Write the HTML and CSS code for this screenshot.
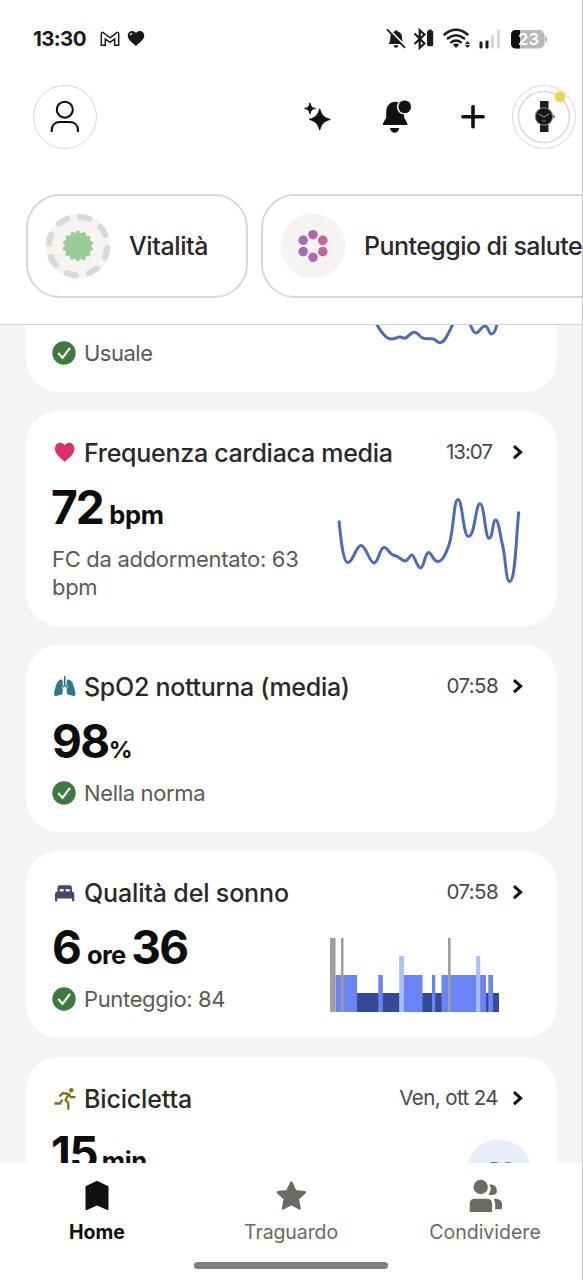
FILE: index.html
```html
<!DOCTYPE html>
<html lang="it">
<head>
<meta charset="utf-8">
<title>Home</title>
<link rel="stylesheet" href="styles.css">
</head>
<body>
<svg class="defs" width="0" height="0" aria-hidden="true">
  <symbol id="check" viewBox="0 0 24 24"><circle cx="12" cy="12" r="11.7" fill="#3c7a3f"/><path d="M6.200 11.900l4.300 4.900L18 6.800" fill="none" stroke="#fff" stroke-width="2.200"/></symbol>
  <symbol id="chevron" viewBox="0 0 12 18"><path d="M2 2.200l6.600 6L2 14.200" fill="none" stroke="#0d0d0d" stroke-width="3"/></symbol>
</svg>
<div class="screen">
  <header class="header">
    <div class="status">
      <span class="clock">13:30</span>
      <svg class="st-mail" viewBox="0 0 20 16"><path d="M1.300 14.200V2.600Q1.500 1 3 1.400L10 6.800l7-5.400q1.500-.4 1.700 1.200v11.600h-4V8L10 11.400 5.300 8v6.200z" fill="none" stroke="#1a1a1a" stroke-width="1.500"/></svg>
      <svg class="st-heart" viewBox="0 0 18 17"><path d="M9 16C5 12.500.7 9.500.7 5.500.7 2.700 3 .9 5.300.9c1.600 0 2.900.8 3.700 2 .8-1.200 2-2 3.600-2 2.500 0 4.700 1.900 4.700 4.700C17.300 9.500 13 12.500 9 16z" fill="#1a1a1a"/><path d="M3.300 5.200Q3.600 3.700 5 3.300" fill="none" stroke="#fff" stroke-width="1.300"/></svg>
      <svg class="st-right" viewBox="385 26 165 26">
        <g fill="#1a1a1a">
          <path d="M388.500 44c1.200-1.500 1.800-3 1.800-6 0-4 2.300-6.300 5-6.700v-1h1.800v1c3 .5 5 2.900 5 6.700 0 3 .6 4.500 1.800 6z"/>
          <path d="M393.500 45.300h5q-.5 2.500-2.500 2.500t-2.500-2.500z"/>
        </g>
        <path d="M388.200 28.400l18 18.500" stroke="#fff" stroke-width="1.800"/>
        <path d="M387 29.400l18 18.500" stroke="#1a1a1a" stroke-width="1.700"/>
        <path d="M414.500 33.500l10 10-4.800 4.300V30.200l4.800 4.300-10 9.500" fill="none" stroke="#1a1a1a" stroke-width="2.200"/>
        <rect x="427" y="30.700" width="6.200" height="15.500" rx="1.400" fill="#1a1a1a"/><rect x="428.500" y="29.500" width="3.200" height="2" fill="#1a1a1a"/>
        <g fill="none" stroke="#1a1a1a" stroke-width="2.400" stroke-linecap="round">
          <path d="M444.500 34.500q11.500-9.500 23 0"/><path d="M447.800 38.500q8.200-6.500 16.400 0"/><path d="M451.200 42.200q4.800-3.600 9.600 0"/>
        </g>
        <path d="M452.800 44.600q3.200-2 6.400 0L456 47.900z" fill="#1a1a1a"/>
        <path d="M469.500 41l2.600 3h-5.200zM469.500 48l2.600-3h-5.200z" fill="#1a1a1a" transform="translate(-2 0)"/>
        <rect x="479.500" y="41.500" width="3" height="7" rx="1" fill="#1a1a1a"/><rect x="485.500" y="40.500" width="3" height="8" rx="1" fill="#1a1a1a"/>
        <rect x="491" y="35" width="3" height="13.500" rx="1" fill="#d8d8d8"/><rect x="497" y="29.500" width="3" height="19" rx="1" fill="#d8d8d8"/>
        <rect x="511" y="30" width="33.500" height="18.500" rx="5" fill="#b9b9b9"/><path d="M520 30h-4q-5 0-5 5v8.500q0 5 5 5h4z" fill="#111"/><path d="M545 35.500q2.200 1 2.200 3.700t-2.200 3.800z" fill="#b9b9b9"/>
        <text x="528.500" y="45.200" class="battery">23</text>
      </svg>
    </div>
    <div class="toolbar">
      <span class="round avatar"><svg width="40" height="40" viewBox="45 97 40 40" fill="none" stroke="#0d0d0d" stroke-width="2.100"><circle cx="64.800" cy="109.700" r="8"/><path d="M51.700 132v-1.500c0-5.500 3.500-8.500 8.300-8.500h9.500c4.900 0 8.500 3 8.500 8.500v1.500"/></svg></span>
      <svg class="tool sparkle" viewBox="297 97 40 40" fill="#111" stroke="#111" stroke-width=".9"><path d="M319.700 108.700c1.700 6.300 4.300 9 10.600 10.700-6.300 1.700-8.900 4.400-10.600 10.700-1.700-6.300-4.300-9-10.600-10.700 6.300-1.700 8.900-4.400 10.600-10.700z"/><path d="M310 102.900c.8 3.600 1.900 4.900 5.500 5.500-3.600.7-4.700 1.900-5.500 5.500-.8-3.600-1.900-4.800-5.500-5.500 3.600-.6 4.700-1.900 5.500-5.500z"/></svg>
      <svg class="tool bell" viewBox="376 97 40 40" fill="#111"><path d="M383.500 125c-.8 0-.8-1-.3-2l3-5.500v-5c0-6.700 3.700-10.800 8.900-10.800s9 4.100 9 10.800v5l3 5.500c.5 1 .5 2-.5 2z"/><path d="M389.800 128h9.500q-1.200 4.700-4.700 4.700t-4.800-4.700z"/><circle cx="404.700" cy="106.800" r="7.800" fill="#fff"/><circle cx="404.700" cy="106.800" r="6.400"/></svg>
      <svg class="tool plus" viewBox="453 97 40 40"><path d="M462.900 116.700h20.200M473 106.600v20.200" stroke="#111" stroke-width="3.600" stroke-linecap="round"/></svg>
      <span class="round device"><svg width="60" height="60" viewBox="514 87 60 60"><circle cx="543.900" cy="116.900" r="25.500" fill="none" stroke="#dad8d4" stroke-width="1.500"/><path d="M540 101h8.500v8H540zM540 124h8.500v8H540z" fill="#1d1d1d"/><circle cx="544" cy="116.500" r="9.300" fill="#8c8c8c"/><circle cx="544" cy="116.500" r="8.200" fill="#161616"/><rect x="553" y="115.300" width="2" height="2.500" fill="#777"/><path d="M538.500 114l5.500 3 5.500-3.200" fill="none" stroke="#bbb" stroke-width=".8"/><path d="M542 121h4" stroke="#999" stroke-width=".7"/><circle cx="560" cy="96.800" r="5.300" fill="#f4cf4d"/></svg></span>
    </div>
    <div class="chips">
      <div class="chip vitality">
        <svg width="66" height="66" viewBox="-33 -33 66 66"><circle r="32.500" fill="#f5f4f2"/><circle r="29.300" fill="none" stroke="#dcd9d4" stroke-width="6" stroke-linecap="round" stroke-dasharray="9.500 13.510" transform="rotate(-86)"/><circle r="13.500" fill="#99cd98"/><circle r="13.600" fill="none" stroke="#99cd98" stroke-width="3.600" stroke-linecap="round" stroke-dasharray="0.010 6.093" transform="rotate(-90)"/></svg>
        <span class="t-vital">Vitalità</span>
      </div>
      <div class="chip health">
        <svg width="66" height="66" viewBox="-33 -33 66 66"><circle r="32.500" fill="#f5f4f2"/><circle cy="-11.300" r="4.800" fill="#b06aa3"/><circle cx="9.800" cy="-5.600" r="4.800" fill="#c3659b"/><circle cx="9.800" cy="5.600" r="4.800" fill="#c3659b"/><circle cy="11.300" r="4.800" fill="#b06aa3"/><circle cx="-9.800" cy="5.600" r="4.800" fill="#a16eae"/><circle cx="-9.800" cy="-5.600" r="4.800" fill="#a16eae"/></svg>
        <span class="t-health">Punteggio di salute</span>
      </div>
    </div>
  </header>

  <main class="feed">
    <section class="card clipped">
      <div class="note"><svg class="ok"><use href="#check"/></svg><span class="t-usual">Usuale</span></div>
      <svg class="tail" width="130" height="24" viewBox="370 325 130 24"><path d="M376.500 324C381 332 386 339 391 339S397 336.800 400 337s3.500 1.500 5 1.200c3.500-.7 5-6 9.300-6s5 6 10 6.300 6 .200 8 .2c3.500 0 4 4 7.700 4 5 0 8-9 13-18.700M470 324c1.500 3 3 9 6 9s5.500-7 9-7 3.500 8 6.500 8 4.500-5.500 5.500-10" class="line"/></svg>
    </section>

    <section class="card">
      <div class="head"><svg class="ico" viewBox="53 441 24 24"><path d="M64.700 461.700C60 457.500 55 454 55 448.700c0-3.800 2.500-6 5.200-6 1.900 0 3.500 1 4.500 2.500 1-1.500 2.600-2.500 4.500-2.500 2.700 0 5.200 2.200 5.200 6 0 5.300-5 8.800-9.700 13z" fill="#dc3060"/></svg><h2 class="t-heart">Frequenza cardiaca media</h2><time class="time-a">13:07</time><svg class="go"><use href="#chevron"/></svg></div>
      <div class="row">
        <div class="info"><p class="value"><b class="n72">72</b> <small class="u-bpm">bpm</small></p><p class="note long">FC da addormentato: 63<br>bpm</p></div>
        <svg class="chart" width="201" height="129" viewBox="330 473 201 129"><path class="line" d="M339 520.500C340.500 536 343 562.500 348 562.500 353 562.500 356 545.500 361 545.500S369.500 563 374 563 379.500 547.500 384 547.500 389 554.500 394 555.300 402 561 405 561 409.500 555 412 555 417 568 420.500 568 425 552.500 428.500 552.500 433 561.500 438 561.500C443 561.500 446.500 552 449 545 454 530 453.500 499.500 458 499.500S463 536.500 468.500 536.500C475 536.500 475.500 503.800 480 503.800S485 538.200 489 538.200 492.500 520 495.500 520C499 520 500 536 503 547 505.500 558 506 581.500 509.500 581.500 515.500 581.500 516 537 518.800 511.500"/></svg>
      </div>
    </section>

    <section class="card">
      <div class="head"><svg class="ico" viewBox="53 675 24 24" fill="#31788a"><path d="M64 676h1.500v9l2 2-1 1-1.800-1.700-1.800 1.700-1-1 2.100-2z"/><path d="M61.800 679.500c-3-.3-4.800 2-6 6.500-1 3.500-1.700 6-1.700 8 0 2 1.200 2.500 3 1.700 2-.9 5-.2 5.500-2.700.3-2 .2-3 .1-4.500l-1.200-1.400 1.300-1.600c0-2.500.3-5.700-1-6z"/><path d="M67.700 679.500c3-.3 4.800 2 6 6.500 1 3.500 1.700 6 1.700 8 0 2-1.200 2.500-3 1.700-2-.9-5-.2-5.500-2.700-.3-2-.2-3-.1-4.500l1.200-1.400-1.300-1.600c0-2.500-.3-5.700 1-6z"/></svg><h2 class="t-spo2">SpO2 notturna (media)</h2><time>07:58</time><svg class="go"><use href="#chevron"/></svg></div>
      <div class="row"><div class="info"><p class="value"><b class="n98">98</b><small class="u-pct">%</small></p><div class="note"><svg class="ok"><use href="#check"/></svg><span class="t-norm">Nella norma</span></div></div></div>
    </section>

    <section class="card">
      <div class="head"><svg class="ico" viewBox="53 880 24 24"><path d="M57.500 890.500v-4q0-2.200 2.200-2.200h10q2.200 0 2.200 2.200v4q2.400.2 2.400 2.500v7.300h-2.200v-2.800H57.200v2.800H55V893q0-2.300 2.500-2.500zm2.200 0h3.900V888h-3.900zm6 0h3.900V888h-3.900z" fill="#424771" fill-rule="evenodd"/></svg><h2 class="t-sleep">Qualità del sonno</h2><time>07:58</time><svg class="go"><use href="#chevron"/></svg></div>
      <div class="row">
        <div class="info"><p class="value"><b class="n6">6</b> <small class="u-ore">ore</small> <b class="n36">36</b></p><div class="note"><svg class="ok"><use href="#check"/></svg><span class="t-score">Punteggio: 84</span></div></div>
        <svg class="chart" width="201" height="101" viewBox="330 913 201 101">
          <path d="M356.500 993H499v19H356.500z" fill="#384a95"/>
          <path d="M335.500 975H357v37h-21.500zM378.300 975h4.500v37h-4.500zM403.500 975H422.500v37h-19zM432 975h3.300v37H432zM441.500 975H486v37h-44.500zM488.300 975h4.700v37h-4.700z" fill="#6884f7"/>
          <path d="M399.200 956h4.700v56h-4.700zM476.200 956h4v56h-4z" fill="#a8bef6"/>
          <path d="M330 938h5.500v74H330zM341 938h2.500v74H341zM448 938h2.600v74H448z" fill="#a09e9d"/>
        </svg>
      </div>
    </section>

    <section class="card last">
      <div class="head"><svg class="ico" viewBox="53 1086 24 24"><circle cx="71.300" cy="1089.300" r="2.200" fill="#806d20"/><path d="M59.300 1095.500l3.700-3.500 5.700 1-3.200 6 2.800 3v6.800M68.500 1093l2.300 3.200h4.500M62.500 1098.500l-2.500 4h-5.500" fill="none" stroke="#806d20" stroke-width="2.300"/></svg><h2 class="t-bike">Bicicletta</h2><time class="time-d">Ven, ott 24</time><svg class="go"><use href="#chevron"/></svg></div>
      <div class="row"><div class="info"><p class="value"><b class="n15">15</b> <small class="u-min">min</small></p></div>
      <svg class="chart" width="201" height="44" viewBox="330 1119 201 44"><circle cx="499" cy="1172" r="32.500" fill="#e6edfc"/><path d="M490.500 1162.700h7M505.500 1162.900h5" stroke="#424771" stroke-width="1"/></svg></div>
    </section>
  </main>

  <nav class="nav">
    <div class="tabs">
      <div class="tab active"><svg viewBox="79 1178 36 36"><path d="M97 1182l10.500 5v22l-10.500-4.700-10.500 4.700v-22z" fill="#111" stroke="#111" stroke-width="2" stroke-linejoin="round"/></svg><span>Home</span></div>
      <div class="tab goal"><svg viewBox="273 1178 36 36"><path d="M291.300 1182.500l4 8.600 9.500 1.200-7 6.500 1.800 9.700-8.300-4.600-8.300 4.600 1.800-9.700-7-6.500 9.500-1.200z" fill="#6d6963" stroke="#6d6963" stroke-width="2.400" stroke-linejoin="round"/></svg><span>Traguardo</span></div>
      <div class="tab share"><svg viewBox="467 1178 36 36" fill="#6d6963"><circle cx="480.700" cy="1187" r="7.200"/><path d="M469.700 1211v-7q0-5.200 5.200-5.200h12q5.200 0 5.200 5.200v7q0 1-1 1h-20.400q-1 0-1-1z"/><path d="M488.500 1194.700q4.200-6.500.8-10.400 7.600.5 7.600 6.200 0 6-8.400 4.200zM495.200 1198.800q6.900 0 6.900 6v3q0 1.500-1.500 1.500h-5.400v-5q0-3-1.500-5.500z"/></svg><span>Condividere</span></div>
    </div>
    <div class="indicator"></div>
  </nav>
</div>
</body>
</html>
```
FILE: styles.css
```css
* { box-sizing: border-box; margin: 0; padding: 0; }
body { font-family: Inter, "Liberation Sans", sans-serif; background: #fff; color: #111; }
.defs { position: absolute; }
.screen { width: 583px; height: 1280px; display: flex; flex-direction: column; overflow: hidden; border-right: 1px solid #c9c9c9; background: #fff; }
svg { display: block; flex: none; }

.header { height: 325px; flex: none; border-bottom: 1px solid #d8d6d3; overflow: hidden; }
.status { height: 77px; padding-left: 33px; display: flex; align-items: center; }
.clock { width: 67px; font-size: 20.500px; font-weight: 650; letter-spacing: -0.6px; color: #1a1a1a; }
.st-mail { width: 20px; height: 16px; }
.st-heart { width: 18px; height: 17px; margin-left: 7px; }
.st-right { width: 165px; height: 26px; margin-left: auto; margin-right: 32px; }
.battery { font-size: 16.500px; font-weight: 600; fill: #fff; text-anchor: middle; }

.toolbar { height: 79px; padding: 0 6px 0 33px; display: flex; align-items: center; }
.round { width: 64px; height: 64px; border: 1.500px solid #dad8d4; border-radius: 50%; display: flex; align-items: center; justify-content: center; flex: none; }
.tool { width: 40px; height: 40px; }
.sparkle { margin-left: auto; }
.bell { margin-left: 39px; }
.plus { margin-left: 37px; }
.device { margin-left: 19px; }

.chips { display: flex; gap: 13px; padding: 38px 0 0 26px; }
.chip { height: 104px; border: 2px solid #dad8d3; border-radius: 34px; display: flex; align-items: center; padding-left: 17px; gap: 18px; font-size: 25px; font-weight: 500; color: #292929; flex: none; white-space: nowrap; }
.vitality { width: 222px; }
.health { width: 400px; }
.t-vital { letter-spacing: -0.4px; }
.t-health { letter-spacing: -0.55px; }

.feed { height: 838px; flex: none; overflow: hidden; background: #f5f4f2; padding: 0 25px 0 26px; display: flex; flex-direction: column; gap: 19px; }
.card { background: #fff; border-radius: 33px; padding: 22px 0 24px 26px; flex: none; }
.clipped { height: 67px; border-radius: 0 0 33px 33px; padding-top: 0; display: flex; justify-content: space-between; }
.clipped .note { margin-top: 14px; letter-spacing: -0.5px; }
.tail { margin-right: 57px; }
.last { height: 106px; border-radius: 33px 33px 0 0; padding-bottom: 0; overflow: hidden; }

.head { height: 40px; display: flex; align-items: center; padding-right: 33px; white-space: nowrap; }
.ico { width: 24px; height: 24px; margin: 0 7px 0 1px; }
.head h2 { font-size: 25px; font-weight: 450; letter-spacing: -0.28px; line-height: 40px; color: #292929; flex: 1; }
.head .t-sleep, .head .t-bike { letter-spacing: -0.15px; }
.head time { font-size: 20.500px; line-height: 36px; padding-bottom: 3px; letter-spacing: -0.6px; color: #484848; }
.go { width: 12px; height: 18px; margin-left: 14px; }
.head .time-a { margin-right: 6px; letter-spacing: -1px; }

.row { display: flex; justify-content: space-between; }
.chart { margin-right: 26px; }
.info { padding-top: 9px; white-space: nowrap; }
.value { height: 63px; line-height: 50px; }
.value b { font-size: 46px; font-weight: 700; letter-spacing: -1.500px; color: #0d0d0d; }
.value .n72 { margin-left: -1px; letter-spacing: -2px; }
.value small { font-size: 25.500px; font-weight: 700; letter-spacing: -0.3px; color: #0d0d0d; }
.value .u-bpm { margin-left: 2px; }
.value .u-ore { margin: 0 1px 0 2px; letter-spacing: -0.6px; }
.value .n15 { margin-left: -1px; }
.value .u-pct { font-size: 23.500px; }
.note { display: flex; align-items: center; height: 29px; line-height: 28px; padding-bottom: 1px; font-size: 22px; letter-spacing: -0.35px; color: #5c5955; }
.note.long { display: block; height: 57px; letter-spacing: -0.3px; }
.ok { width: 24px; height: 24px; margin-right: 8px; }
.line { fill: none; stroke: #4f6bb8; stroke-width: 3; }

.nav { height: 117px; flex: none; background: #fff; }
.tabs { display: flex; height: 99px; }
.tab { width: 194px; display: flex; flex-direction: column; align-items: center; padding-top: 15px; font-size: 19.500px; line-height: 24px; color: #6d6963; }
.tab svg { width: 36px; height: 36px; margin-bottom: 6px; }
.tab.goal { letter-spacing: -0.1px; }
.tab.active { color: #0d0d0d; font-weight: 700; }
.indicator { width: 194px; height: 7px; margin-left: 194px; border-radius: 4px; background: #808080; }
```
